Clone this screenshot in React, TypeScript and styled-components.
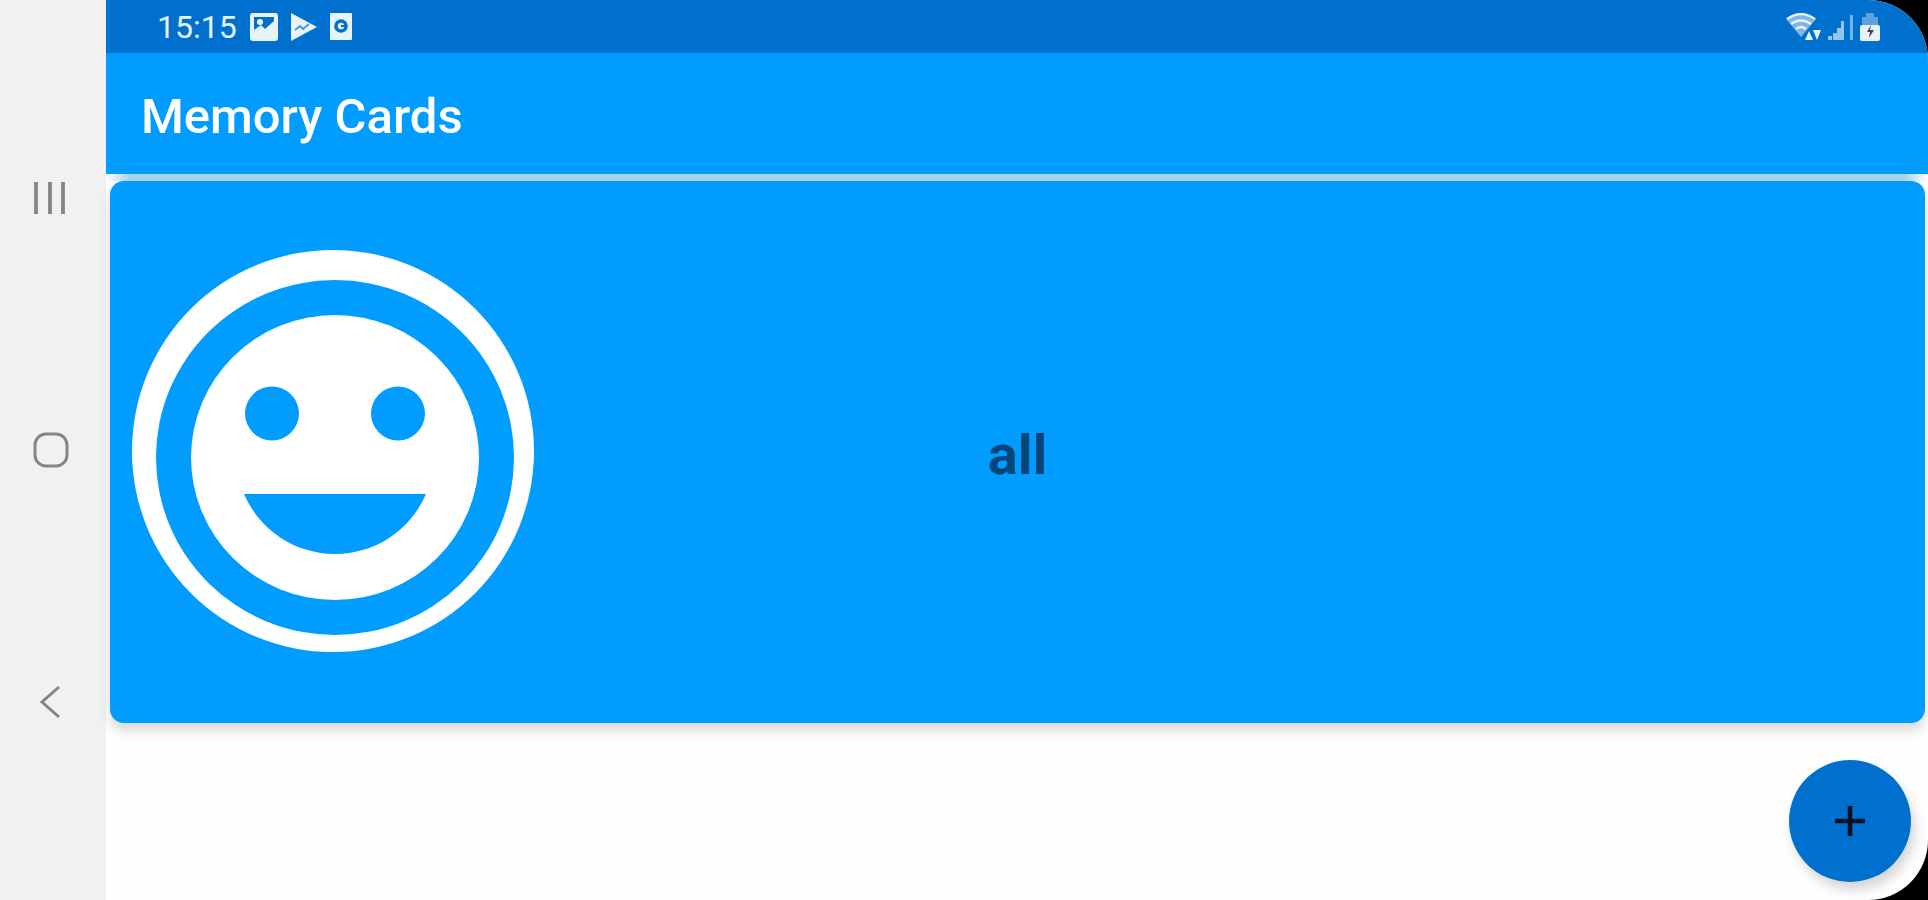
import React from 'react';
import styled, { createGlobalStyle } from 'styled-components';

const palette = {
  primary: '#009cff',
  primaryDark: '#0070cf',
  nav: '#f1f1f1',
  navIcon: '#858585',
  shade: '#a6d2ea',
  label: '#06457a',
};

const GlobalStyle = createGlobalStyle`
  * { box-sizing: border-box; }
  body { margin: 0; background: #000; font-family: Roboto, "Liberation Sans", sans-serif; }
  button { border: 0; padding: 0; background: none; font: inherit; cursor: pointer; }
  svg { display: block; }
`;

const Device = styled.div`
  display: flex;
  min-height: 100vh;
  overflow: hidden;
  background: #fefefe;
  border-radius: 0 60px 60px 0;
`;

const SystemNav = styled.nav`
  flex: none;
  width: 106px;
  padding-right: 5px;
  display: flex;
  flex-direction: column;
  align-items: center;
  justify-content: center;
  gap: 192px;
  background: ${palette.nav};
`;

const NavButton = styled.button`
  width: 60px;
  height: 60px;
  display: grid;
  place-items: center;
  color: ${palette.navIcon};
`;

const Screen = styled.div`
  flex: 1;
  min-width: 0;
  display: flex;
  flex-direction: column;
  position: relative;
`;

const StatusBar = styled.div`
  height: 53px;
  padding: 0 48px 0 51px;
  display: flex;
  align-items: center;
  justify-content: space-between;
  background: ${palette.primaryDark};
  color: #e6f3fb;
`;

const StatusGroup = styled.div<{ $gap: number }>`
  display: flex;
  align-items: center;
  gap: ${(p) => p.$gap}px;
`;

const Clock = styled.time`
  font-size: 32px;
  line-height: 40px;
`;

const AppBar = styled.header`
  height: 121px;
  padding: 6px 35px 0;
  display: flex;
  align-items: center;
  background: ${palette.primary};
`;

const Title = styled.h1`
  margin: 0;
  color: #fff;
  font-size: 49px;
  line-height: 60px;
  font-weight: 500;
`;

const CardList = styled.main`
  padding: 7px 3px 7px 4px;
  background: linear-gradient(90deg, #fefefe, ${palette.shade} 24px calc(100% - 24px), #fefefe) 0 0 / 100% 7px no-repeat;
`;

const DeckCard = styled.button`
  width: 100%;
  min-height: 542px;
  padding: 0 21px;
  display: grid;
  grid-template-columns: 1fr auto 1fr;
  align-items: center;
  justify-items: start;
  border-radius: 14px;
  background: ${palette.primary};
  box-shadow: 0 8px 12px rgba(0, 0, 0, 0.14);
`;

const DeckName = styled.span`
  padding-top: 6px;
  color: ${palette.label};
  font-size: 56px;
  line-height: 64px;
  font-weight: 700;
`;

const AddButton = styled.button`
  position: absolute;
  right: 17px;
  bottom: 18px;
  width: 122px;
  height: 122px;
  display: grid;
  place-items: center;
  border-radius: 50%;
  background: ${palette.primaryDark};
  color: #06121f;
  box-shadow: 4px 8px 12px rgba(0, 0, 0, 0.16);
`;

const RecentsIcon = () => (
  <svg width="36" height="36" viewBox="0 0 36 36" stroke="currentColor" strokeWidth="3.8" aria-hidden="true">
    <path d="M3 2v32M17 2v32M30 2v32" />
  </svg>
);

const HomeIcon = () => (
  <svg width="36" height="36" viewBox="0 0 36 36" fill="none" stroke="currentColor" strokeWidth="3" aria-hidden="true">
    <rect x="2" y="2" width="32" height="32" rx="11" />
  </svg>
);

const BackIcon = () => (
  <svg width="36" height="36" viewBox="0 0 36 36" fill="none" stroke="currentColor" strokeWidth="3" aria-hidden="true">
    <path d="M26 3L9 18L26 33" />
  </svg>
);

const ImageIcon = () => (
  <svg width="28" height="28" viewBox="0 0 28 28" aria-hidden="true">
    <path
      fill="currentColor"
      fillRule="evenodd"
      d="M3 0h22a3 3 0 0 1 3 3v22a3 3 0 0 1-3 3H3a3 3 0 0 1-3-3V3a3 3 0 0 1 3-3zM4 4v13l7-5 4 4 9-8V4z"
    />
    <circle cx="10" cy="9" r="3" fill="currentColor" />
  </svg>
);

const PlayIcon = () => (
  <svg width="26" height="28" viewBox="0 0 26 28" aria-hidden="true">
    <path d="M0 0L26 14L0 28z" fill="currentColor" />
    <path d="M4 17l5-4 3 3 6-5" fill="none" stroke={palette.primaryDark} strokeWidth="1.8" opacity="0.7" />
  </svg>
);

const BadgeIcon = () => (
  <svg width="22" height="27" viewBox="0 0 22 27" aria-hidden="true">
    <rect width="22" height="27" rx="1" fill="currentColor" />
    <circle cx="11" cy="13" r="5" fill="none" stroke={palette.primaryDark} strokeWidth="3.6" />
    <path d="M11 13h5" stroke={palette.primaryDark} strokeWidth="2" />
  </svg>
);

const WifiIcon = () => (
  <svg width="36" height="28" viewBox="0 0 36 28" fill="none" aria-hidden="true">
    <path d="M0 6Q15-4 30 6L15 24z" fill="currentColor" opacity="0.55" />
    <path d="M1 6Q15-4 29 6M5 11q10-7 20 0M10 16q5-4 10 0" stroke="currentColor" strokeWidth="2.4" />
    <path d="M19 27l4-9 4 9zM27 17h8l-4 10z" fill="currentColor" />
  </svg>
);

const SignalIcon = () => (
  <svg width="26" height="28" viewBox="0 0 26 28" fill="currentColor" aria-hidden="true">
    <path d="M0 23h4v4H0zM5 20h4v7H5zM9 15h4v12H9zM13 8h3v19h-3z" opacity="0.65" />
    <path d="M22 2h3v25h-3z" opacity="0.5" />
  </svg>
);

const BatteryIcon = () => (
  <svg width="20" height="28" viewBox="0 0 20 28" aria-hidden="true">
    <path d="M6 0h8v4h4v9H2V4h4z" fill="currentColor" opacity="0.4" />
    <rect y="12" width="20" height="16" rx="2" fill="currentColor" />
    <path d="M11 12l-4 7h3l-1 6 5-8h-4z" fill="#3c4650" />
  </svg>
);

const SmileyIcon = () => (
  <svg width="404" height="404" viewBox="0 0 404 404" aria-hidden="true">
    <circle cx="202" cy="201" r="201" fill="#fff" />
    <ellipse cx="204" cy="207.5" rx="179" ry="177.5" fill={palette.primary} />
    <ellipse cx="204" cy="207.5" rx="144" ry="142.5" fill="#fff" />
    <g fill={palette.primary}>
      <circle cx="141" cy="163.5" r="27" />
      <circle cx="267" cy="163.5" r="27" />
      <path d="M113 244h182a99 99 0 0 1-182 0z" />
    </g>
  </svg>
);

const PlusIcon = () => (
  <svg width="32" height="32" viewBox="0 0 32 32" stroke="currentColor" strokeWidth="4.6" aria-hidden="true">
    <path d="M16 1v30M1 16h30" />
  </svg>
);

export default function App() {
  return (
    <>
      <GlobalStyle />
      <Device>
        <SystemNav aria-label="System">
          <NavButton type="button" aria-label="Recent apps">
            <RecentsIcon />
          </NavButton>
          <NavButton type="button" aria-label="Home">
            <HomeIcon />
          </NavButton>
          <NavButton type="button" aria-label="Back">
            <BackIcon />
          </NavButton>
        </SystemNav>
        <Screen>
          <StatusBar>
            <StatusGroup $gap={13}>
              <Clock>15:15</Clock>
              <ImageIcon />
              <PlayIcon />
              <BadgeIcon />
            </StatusGroup>
            <StatusGroup $gap={6}>
              <WifiIcon />
              <SignalIcon />
              <BatteryIcon />
            </StatusGroup>
          </StatusBar>
          <AppBar>
            <Title>Memory Cards</Title>
          </AppBar>
          <CardList>
            <DeckCard type="button">
              <SmileyIcon />
              <DeckName>all</DeckName>
            </DeckCard>
          </CardList>
          <AddButton type="button" aria-label="Add deck">
            <PlusIcon />
          </AddButton>
        </Screen>
      </Device>
    </>
  );
}
